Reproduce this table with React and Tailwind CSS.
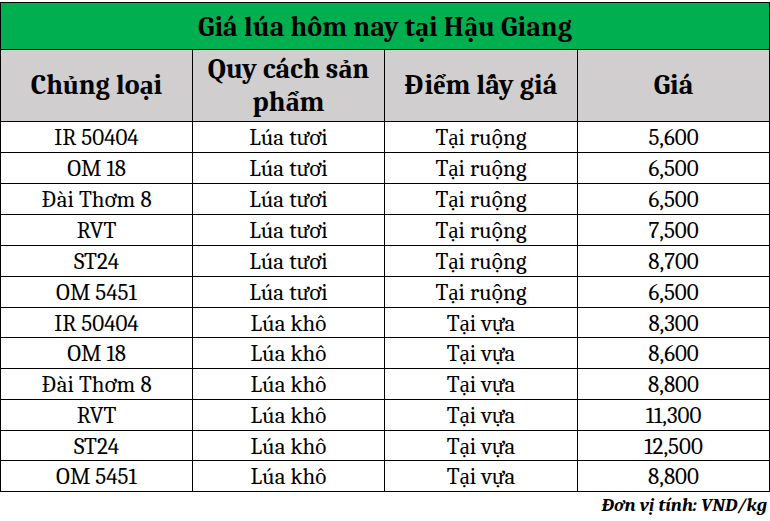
import React from 'react';

const rows = [
  ['IR 50404', 'Lúa tươi', 'Tại ruộng', '5,600'],
  ['OM 18', 'Lúa tươi', 'Tại ruộng', '6,500'],
  ['Đài Thơm 8', 'Lúa tươi', 'Tại ruộng', '6,500'],
  ['RVT', 'Lúa tươi', 'Tại ruộng', '7,500'],
  ['ST24', 'Lúa tươi', 'Tại ruộng', '8,700'],
  ['OM 5451', 'Lúa tươi', 'Tại ruộng', '6,500'],
  ['IR 50404', 'Lúa khô', 'Tại vựa', '8,300'],
  ['OM 18', 'Lúa khô', 'Tại vựa', '8,600'],
  ['Đài Thơm 8', 'Lúa khô', 'Tại vựa', '8,800'],
  ['RVT', 'Lúa khô', 'Tại vựa', '11,300'],
  ['ST24', 'Lúa khô', 'Tại vựa', '12,500'],
  ['OM 5451', 'Lúa khô', 'Tại vựa', '8,800'],
];

// row heights so the grid lines land where the screenshot has them
const rowHeights = ['h-[31px]', 'h-[31px]', 'h-[31px]', 'h-[31px]', 'h-[31px]', 'h-[31px]', 'h-[30px]', 'h-[31px]', 'h-[31px]', 'h-[31px]', 'h-[30px]', 'h-[31px]'];

export default function App() {
  return (
    <div className="w-[770px] h-[521px] bg-white pt-[2px] font-serif [font-family:Liberation_Serif,serif] text-black">
      <table className="w-[769px] table-fixed border-collapse">
        <colgroup>
          <col className="w-[192px]" />
          <col className="w-[192px]" />
          <col className="w-[193px]" />
          <col className="w-[192px]" />
        </colgroup>
        <thead>
          <tr className="h-[47px]">
            <th colSpan={4} className="border border-black bg-[#00b050] text-[28px] font-bold leading-none pt-[2px]">
              Giá lúa hôm nay tại Hậu Giang
            </th>
          </tr>
          <tr className="h-[72px]">
            <th className="border border-black bg-[#d0cece] text-[28px] font-bold leading-[33px]">Chủng loại</th>
            <th className="border border-black bg-[#d0cece] text-[28px] font-bold leading-[33px] px-2">Quy cách sản phẩm</th>
            <th className="border border-black bg-[#d0cece] text-[28px] font-bold leading-[33px]">Điểm lấy giá</th>
            <th className="border border-black bg-[#d0cece] text-[28px] font-bold leading-[33px]">Giá</th>
          </tr>
        </thead>
        <tbody>
          {rows.map((r, i) => (
            <tr key={i} className={rowHeights[i]}>
              {r.map((c, j) => (
                <td key={j} className="border border-black text-center text-[23px] leading-none p-0 pt-[1px]">
                  {c}
                </td>
              ))}
            </tr>
          ))}
        </tbody>
      </table>
      <div className="w-[767px] text-right text-[19px] font-bold italic leading-none mt-[4px]">
        Đơn vị tính: VND/kg
      </div>
    </div>
  );
}
